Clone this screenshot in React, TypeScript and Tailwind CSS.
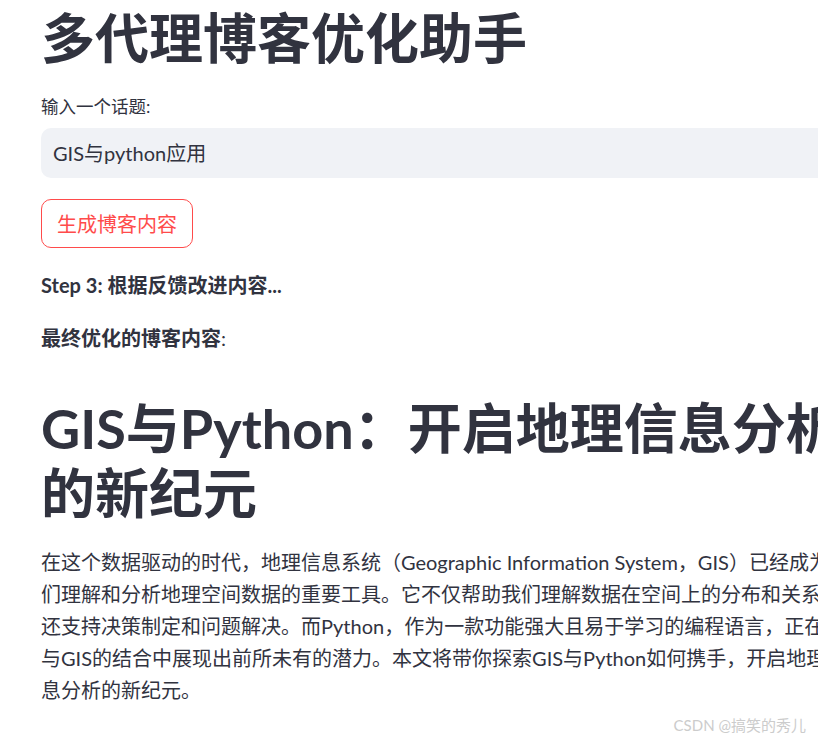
import React from 'react';

// lines as they wrap in the original column (the column runs past the window edge)
const articleLines = [
  '在这个数据驱动的时代，地理信息系统（Geographic Information System，GIS）已经成为我',
  '们理解和分析地理空间数据的重要工具。它不仅帮助我们理解数据在空间上的分布和关系，',
  '还支持决策制定和问题解决。而Python，作为一款功能强大且易于学习的编程语言，正在',
  '与GIS的结合中展现出前所未有的潜力。本文将带你探索GIS与Python如何携手，开启地理信',
  '息分析的新纪元。',
];

export default function App() {
  return (
    <div className="relative w-[818px] h-[742px] overflow-hidden bg-white text-[#31333f] font-['Lato','Noto_Sans_CJK_SC',sans-serif]">
      <div className="ml-[41px] w-[801px] flex flex-col">
        {/* page title */}
        <h1 className="mt-[6px] text-[54px] leading-[65px] font-bold whitespace-nowrap">多代理博客优化助手</h1>

        {/* topic input */}
        <label className="mt-[24px] text-[17.5px] leading-[24px]">输入一个话题:</label>
        <div className="mt-[9px] h-[50px] w-[820px] rounded-[10px] bg-[#f0f2f6] pl-[12px] flex items-center text-[20px]">
          GIS与python应用
        </div>

        <div className="mt-[21px]">
          <button className="h-[49px] px-[15px] rounded-[10px] border border-[#ff4b4b] text-[#ff4b4b] text-[20px] bg-white">
            生成博客内容
          </button>
        </div>

        {/* status */}
        <p className="mt-[21px] text-[20px] leading-[32px] font-bold">Step 3: 根据反馈改进内容...</p>
        <p className="mt-[21px] text-[20px] leading-[32px]">
          <strong className="font-bold">最终优化的博客内容</strong>:
        </p>

        {/* generated article */}
        <h1 className="mt-[42px] text-[54px] leading-[65px] font-bold">GIS与Python：开启地理信息分析的新纪元</h1>
        <p className="mt-[20px] text-[20px] leading-[32px] whitespace-nowrap">
          {articleLines.map((line, i) => (
            <React.Fragment key={i}>
              {line}
              {i < articleLines.length - 1 && <br />}
            </React.Fragment>
          ))}
        </p>
      </div>

      <div className="absolute right-[12px] bottom-[6px] text-[15px] text-[#cccccc]">CSDN @搞笑的秀儿</div>
    </div>
  );
}
